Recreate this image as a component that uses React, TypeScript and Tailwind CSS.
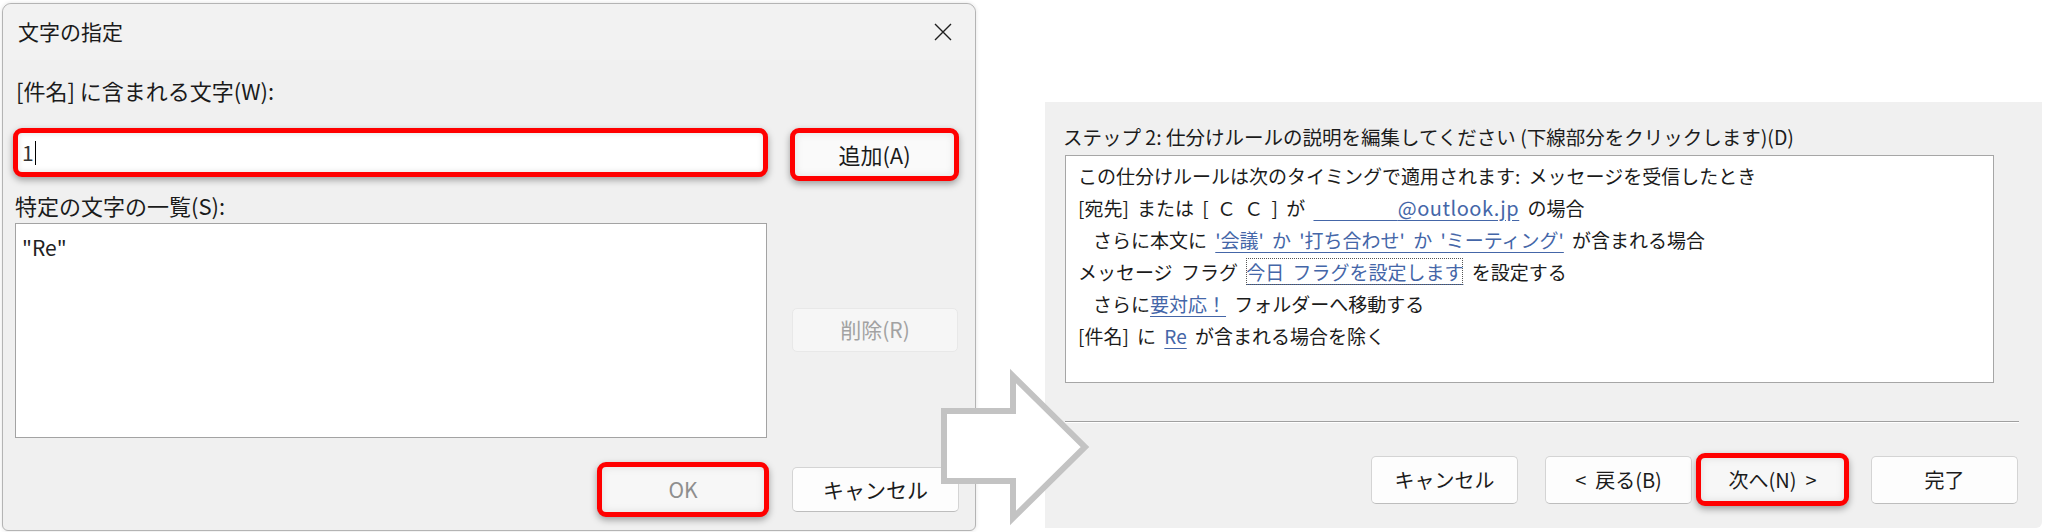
import React from 'react';

const FONT = { fontFamily: '"Noto Sans CJK JP", "Noto Sans", sans-serif' };

function CloseIcon() {
  return (
    <svg width="18" height="18" viewBox="0 0 18 18" className="block">
      <path d="M1 1 L17 17 M17 1 L1 17" stroke="#1f1f1f" strokeWidth="1.4" fill="none" />
    </svg>
  );
}

function WinButton({ label, className = '' }: { label: string; className?: string }) {
  return (
    <div
      className={`flex items-center justify-center rounded-[5px] border border-[#d4d4d4] border-b-[#bdbdbd] bg-[#fdfdfd] text-[20px] text-[#1b1b1b] ${className}`}
    >
      {label}
    </div>
  );
}

function Highlight({ children, className = '' }: { children: React.ReactNode; className?: string }) {
  return (
    <div
      className={`rounded-[9px] border-[5px] border-[#ff0000] shadow-[0_3px_7px_rgba(0,0,0,0.35)] overflow-hidden ${className}`}
    >
      {children}
    </div>
  );
}

function CharDialog() {
  return (
    <div className="ml-[2px] mt-[3px] w-[974px] h-[528px] shrink-0 rounded-t-[9px] rounded-b-[6px] border border-[#b4b4b4] bg-[#f0f0f0] flex flex-col shadow-[0_0_4px_rgba(0,0,0,0.12)]">
      <div className="h-[56px] flex items-center justify-between pl-[15px] pr-[23px] bg-[#f2f2f2] rounded-t-[9px]">
        <span className="text-[21px] text-[#1b1b1b]">文字の指定</span>
        <CloseIcon />
      </div>

      <div className="mt-[15px] ml-[13px] leading-[30px] text-[22px] text-[#1b1b1b]">[件名] に含まれる文字(W):</div>

      <div className="mt-[23px] ml-[10px] flex items-start gap-[22px]">
        <Highlight className="w-[755px] h-[49px] bg-white">
          <div className="h-full flex items-center pl-[4px] shadow-[inset_0_0_6px_rgba(0,0,0,0.12)] text-[21px] text-[#333]">
            <span>1</span>
            <span className="ml-[1px] w-[1px] h-[24px] bg-black" />
          </div>
        </Highlight>
        <Highlight className="w-[169px] h-[53px] bg-[#fafafa]">
          <div className="h-full flex items-center justify-center text-[22px] text-[#1b1b1b] shadow-[inset_0_0_8px_rgba(0,0,0,0.1)]">追加(A)</div>
        </Highlight>
      </div>

      <div className="mt-[9px] ml-[12px] leading-[30px] text-[22px] text-[#1b1b1b]">特定の文字の一覧(S):</div>

      <div className="mt-[3px] ml-[12px] flex items-start">
        <div className="w-[752px] h-[215px] bg-white border border-[#a3a3a3] px-[6px] pt-[8px] text-[21px] leading-[30px] text-[#222]">"Re"</div>
        <div className="ml-[25px] mt-[85px] w-[166px] h-[44px] rounded-[5px] border border-[#e8e8e8] bg-[#f6f6f6] flex items-center justify-center text-[21px] text-[#a2a2a2]">削除(R)</div>
      </div>

      <div className="mt-[24px] pr-[16px] flex items-center justify-end gap-[23px]">
        <Highlight className="w-[172px] h-[55px] bg-[#f7f7f7]">
          <div className="h-full flex items-center justify-center text-[21px] text-[#8e8e8e] shadow-[inset_0_0_8px_rgba(0,0,0,0.1)]">OK</div>
        </Highlight>
        <WinButton label="キャンセル" className="w-[167px] h-[45px] text-[21px]" />
      </div>
    </div>
  );
}

function Link({ children, className = '' }: { children: React.ReactNode; className?: string }) {
  return (
    <span className={`text-[#4466a8] underline decoration-[#4466a8] underline-offset-[4px] ${className}`}>{children}</span>
  );
}

function RulePanel() {
  return (
    <div className="ml-[69px] mt-[102px] w-[997px] h-[426px] shrink-0 bg-[#f0f0f0] rounded-br-[6px] flex flex-col">
      <div className="mt-[20px] ml-[18px] leading-[30px] text-[19.5px] text-[#1b1b1b] whitespace-pre">
        ステップ 2: 仕分けルールの説明を編集してください (下線部分をクリックします)(D)
      </div>

      <div className="mt-[3px] ml-[20px] w-[929px] h-[228px] bg-white border border-[#a6a6a6] pt-[4px] pl-[12px] text-[19px] leading-[32px] text-[#1b1b1b] whitespace-pre [word-spacing:4px]">
        <div>この仕分けルールは次のタイミングで適用されます: メッセージを受信したとき</div>
        <div>
          [宛先] または [ Ｃ Ｃ ] が <Link>{'\u3000\u3000\u3000\u3000\u00a0'}<span className="text-[20px] tracking-[0.5px]">@outlook.jp</span></Link> の場合
        </div>
        <div className="pl-[15px]">
          さらに本文に <Link>'会議' か '打ち合わせ' か 'ミーティング'</Link> が含まれる場合
        </div>
        <div>
          メッセージ フラグ{' '}
          <span className="outline outline-1 outline-dotted outline-[#555] outline-offset-[-1px]">
            <Link>今日 フラグを設定します</Link>
          </span>{' '}
          を設定する
        </div>
        <div className="pl-[15px]">
          さらに<Link>要対応！</Link> フォルダーへ移動する
        </div>
        <div>
          [件名] に <Link>Re</Link> が含まれる場合を除く
        </div>
      </div>

      <div className="mt-[38px] ml-[20px] w-[954px] h-[2px] bg-[#a0a0a0] border-b border-white" />

      <div className="mt-[30px] pr-[24px] flex items-center justify-end">
        <WinButton label="キャンセル" className="w-[147px] h-[48px]" />
        <WinButton label="<  戻る(B)" className="ml-[27px] w-[147px] h-[48px] whitespace-pre" />
        <Highlight className="ml-[4px] w-[153px] h-[53px] bg-[#f7f7f7]">
          <div className="h-full flex items-center justify-center text-[20px] text-[#1b1b1b] shadow-[inset_0_0_8px_rgba(0,0,0,0.1)] whitespace-pre">次へ(N)  &gt;</div>
        </Highlight>
        <WinButton label="完了" className="ml-[22px] w-[147px] h-[48px]" />
      </div>
    </div>
  );
}

function Arrow() {
  return (
    <svg className="absolute left-0 top-0 pointer-events-none" width="2048" height="532" viewBox="0 0 2048 532">
      <polygon
        points="944,411 1013,411 1013,376 1085,447 1013,518 1013,481 944,481"
        fill="#ffffff"
        stroke="#c3c3c3"
        strokeWidth="6"
        strokeLinejoin="miter"
      />
    </svg>
  );
}

export default function App() {
  return (
    <div className="relative w-[2048px] h-[532px] bg-white overflow-hidden flex items-start" style={FONT}>
      <CharDialog />
      <RulePanel />
      <Arrow />
    </div>
  );
}
